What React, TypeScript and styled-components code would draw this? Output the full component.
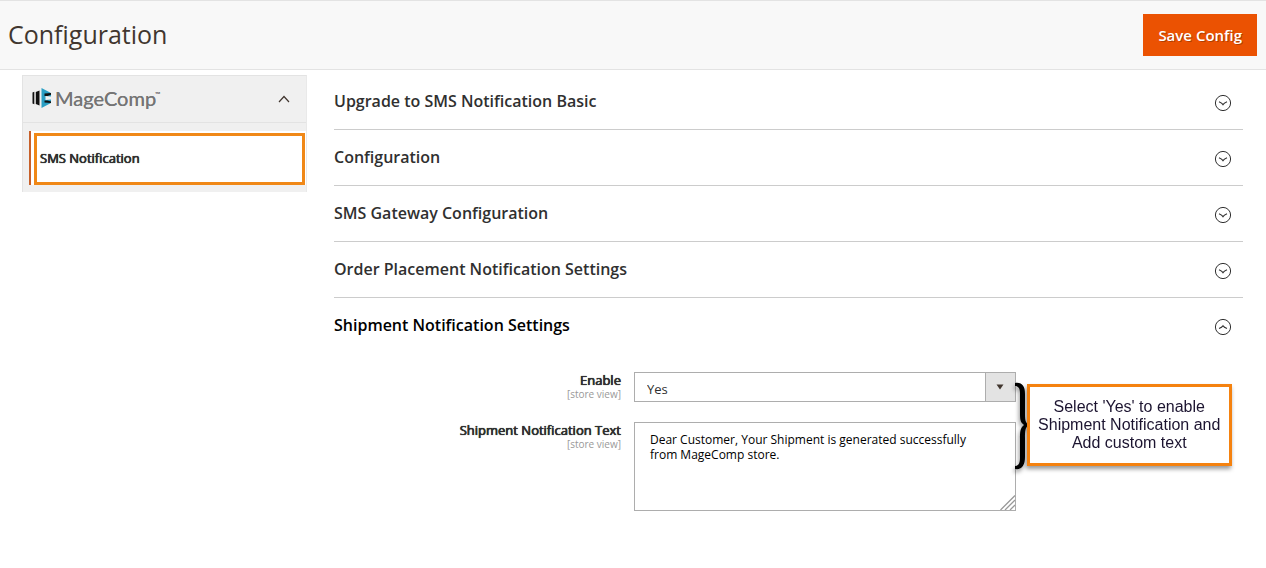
import React from "react";
import styled, { createGlobalStyle } from "styled-components";

const GlobalStyle = createGlobalStyle`
  *, *::before, *::after { box-sizing: border-box; }
  body {
    margin: 0;
    background: #fff;
    color: #303030;
    font-family: "Open Sans", "Noto Sans", sans-serif;
    font-size: 13px;
  }
  button, select, textarea { font: inherit; color: inherit; margin: 0; }
`;

const PageHeader = styled.header`
  display: flex;
  align-items: center;
  justify-content: space-between;
  min-height: 70px;
  padding: 0 9px 0 8px;
  background: #f8f8f8;
  border-top: 1px solid #e3e3e3;
  border-bottom: 1px solid #e3e3e3;
`;

const PageTitle = styled.h1`
  margin: 0;
  padding-bottom: 2px;
  font-size: 25px;
  line-height: 34px;
  font-weight: 400;
  color: #41362f;
`;

const SaveButton = styled.button`
  height: 42px;
  padding: 0 15px;
  border: 0;
  background: #eb5202;
  color: #fff;
  font-size: 15px;
  font-weight: 600;
  text-shadow: 1px 1px 0 rgba(0, 0, 0, 0.25);
`;

const Columns = styled.div`
  display: flex;
  align-items: flex-start;
  gap: 27px;
  padding: 4px 23px 0 22px;
`;

const Sidebar = styled.nav`
  flex: 0 0 285px;
  margin-top: 1px;
  padding-bottom: 7px;
  background: #f0f0f0;
  border: 1px solid #e3e3e3;
  border-bottom: 0;
  border-right-color: #e9e9e9;
`;

const SidebarToggle = styled.button`
  display: flex;
  align-items: center;
  justify-content: space-between;
  width: 100%;
  height: 47px;
  padding: 0 16px 0 9px;
  border: 0;
  border-bottom: 1px solid #e3e3e3;
  background: transparent;
`;

const Brand = styled.span`
  display: flex;
  align-items: center;
  gap: 3px;
  padding-bottom: 2px;
  color: #757575;
  font-family: Lato, sans-serif;
  font-size: 20px;
  line-height: 24px;
  text-shadow: 0 0 0 currentColor;
`;

const Trademark = styled.sup`
  align-self: flex-start;
  margin-left: -4px;
  font-size: 7px;
  line-height: 16px;
`;

const SidebarItem = styled.a`
  display: block;
  margin: 8px 0 0 6px;
  padding: 2px 1px 0 3px;
  border-left: 2px solid #c8602a;
  background: #fff;
  color: #303030;
  font-size: 13px;
  font-weight: 500;
  text-decoration: none;
  text-shadow: 0 0 0 currentColor, 0 0 0 currentColor, 0 0 1px currentColor;
`;

const Highlight = styled.span`
  display: flex;
  align-items: center;
  height: 52px;
  padding: 0 3px 2px;
  border: 3px solid #f08817;
`;

const Main = styled.main`
  flex: 1;
  min-width: 0;
`;

const SectionToggle = styled.button<{ $open?: boolean }>`
  display: flex;
  align-items: center;
  justify-content: space-between;
  width: 100%;
  height: 56px;
  padding: 0 11px 2px 0;
  border: 0;
  border-bottom: 1px solid ${(p) => (p.$open ? "transparent" : "#cccccc")};
  background: transparent;
  color: ${(p) => (p.$open ? "#000" : "#303030")};
  font-size: 16px;
  font-weight: 600;
  text-align: left;

  svg { margin-top: 4px; }
`;

const Fields = styled.div`
  position: relative;
  display: flex;
  flex-direction: column;
  gap: 20px;
  padding: 18px 0 56px;
`;

const Field = styled.div`
  display: grid;
  grid-template-columns: 33% 42%;
  align-items: start;
`;

const FieldLabel = styled.label`
  padding-right: 13px;
  font-size: 13px;
  font-weight: 500;
  line-height: 17px;
  text-align: right;
  text-shadow: 0 0 0 currentColor, 0 0 0 currentColor, 0 0 1px currentColor;
`;

const Scope = styled.small`
  display: block;
  color: #999;
  font-size: 10px;
  font-weight: 400;
  line-height: 11px;
  text-shadow: none;
`;

const Control = styled.div`
  position: relative;
  display: flex;
`;

const Select = styled.select`
  width: 100%;
  height: 30px;
  padding: 4px 40px 0 12px;
  border: 1px solid #adadad;
  border-radius: 0;
  background: #fff;
  appearance: none;
`;

const SelectArrow = styled.span`
  position: absolute;
  top: 0;
  right: 0;
  display: flex;
  align-items: center;
  justify-content: center;
  width: 31px;
  height: 30px;
  border: 1px solid #adadad;
  background: #e3e3e3;
  pointer-events: none;
`;

const TextArea = styled.textarea`
  width: 100%;
  height: 89px;
  padding: 9px 40px 10px 15px;
  border: 1px solid #adadad;
  border-radius: 0;
  color: #000;
  font-size: 12px;
  line-height: 15px;
  resize: none;
`;

const Grip = styled.svg`
  position: absolute;
  right: 1px;
  bottom: 1px;
  pointer-events: none;
`;

const Annotation = styled.aside`
  position: absolute;
  top: 28px;
  left: 75%;
  display: flex;
  align-items: flex-start;
  margin-left: -1px;
  filter: drop-shadow(-1px 3px 2px rgba(0, 0, 0, 0.4));
`;

const AnnotationBox = styled.p`
  width: 205px;
  height: 82px;
  margin: 2px 0 0 -2px;
  padding: 11px 0 0;
  border: 3px solid #f5820f;
  background: #fff;
  color: #1c1430;
  font-family: "Liberation Sans", Arial, sans-serif;
  font-size: 16px;
  line-height: 18px;
  text-align: center;
`;

function BrandMark() {
  return (
    <svg width="20" height="22" viewBox="0 0 20 22" aria-hidden="true">
      <path d="M0.500 5.500l1.800-0.700v12.400l-1.800-0.700zM3.800 5l3.700-1.500v15L3.800 17z" fill="#111" />
      <path d="M9.500 1L19 6v3.500l-5.500-0.500v4l5.500-0.500V16L9.500 21z" fill="#2b9fc4" />
      <path d="M12.500 6.500L19 6v1.800l-3.500 1.200h-3zM12.500 13.500h3L19 14.500V16l-6.500-0.500z" fill="#111" />
    </svg>
  );
}

function CircleChevron({ up }: { up?: boolean }) {
  return (
    <svg width="18" height="18" viewBox="0 0 18 18" fill="none" stroke="#303030" aria-hidden="true">
      <circle cx="9" cy="9" r="7.600" strokeWidth="1" />
      <path d={up ? "M5 10.500Q8 9.300 9 7.700Q10 9.300 13 10.500" : "M5 7.800Q8 9 9 10.600Q10 9 13 7.800"} strokeWidth="1.100" />
    </svg>
  );
}

const closedSections = [
  "Upgrade to SMS Notification Basic",
  "Configuration",
  "SMS Gateway Configuration",
  "Order Placement Notification Settings",
];

export default function App() {
  return (
    <>
      <GlobalStyle />
      <PageHeader>
        <PageTitle>Configuration</PageTitle>
        <SaveButton type="button">Save Config</SaveButton>
      </PageHeader>
      <Columns>
        <Sidebar>
          <SidebarToggle type="button" aria-expanded="true">
            <Brand>
              <BrandMark />
              MageComp
              <Trademark>™</Trademark>
            </Brand>
            <svg width="12" height="8" viewBox="0 0 12 8" fill="none" stroke="#41362f" strokeWidth="1.200" aria-hidden="true">
              <path d="M1 7l5-5.500L11 7" />
            </svg>
          </SidebarToggle>
          <SidebarItem href="#sms-notification">
            <Highlight>SMS Notification</Highlight>
          </SidebarItem>
        </Sidebar>
        <Main>
          {closedSections.map((title) => (
            <SectionToggle key={title} type="button" aria-expanded="false">
              {title}
              <CircleChevron />
            </SectionToggle>
          ))}
          <SectionToggle $open type="button" aria-expanded="true">
            Shipment Notification Settings
            <CircleChevron up />
          </SectionToggle>
          <Fields>
            <Field>
              <FieldLabel htmlFor="enable">
                Enable
                <Scope>[store view]</Scope>
              </FieldLabel>
              <Control>
                <Select id="enable" defaultValue="Yes">
                  <option>Yes</option>
                  <option>No</option>
                </Select>
                <SelectArrow>
                  <svg width="8" height="6" viewBox="0 0 8 6" aria-hidden="true">
                    <path d="M0.500 0.500h7L4 5.500z" fill="#41362f" />
                  </svg>
                </SelectArrow>
              </Control>
            </Field>
            <Field>
              <FieldLabel htmlFor="shipment-text">
                Shipment Notification Text
                <Scope>[store view]</Scope>
              </FieldLabel>
              <Control>
                <TextArea
                  id="shipment-text"
                  defaultValue={"Dear Customer, Your Shipment is generated successfully\nfrom MageComp store."}
                />
                <Grip width="15" height="15" viewBox="0 0 15 15" fill="none" stroke="#999" aria-hidden="true">
                  <path d="M0.500 15L15 0.500M5 15L15 5M10 15l5-5" strokeWidth="1.300" />
                </Grip>
              </Control>
            </Field>
            <Annotation>
              <svg width="14" height="88" viewBox="0 0 14 88" aria-hidden="true">
                <path
                  d="M0 1C7 0 10 4 10 12V30C10 37 10 41 14 43C10 45 10 49 10 56V75C10 83 7 88 0 87V84C3 84 5 82 5 76V57C5 50 5 46 9 43C5 40 5 37 5 30V11C5 6 3 4 0 4Z"
                  fill="#000"
                />
              </svg>
              <AnnotationBox>
                Select 'Yes' to enable
                <br />
                Shipment Notification and
                <br />
                Add custom text
              </AnnotationBox>
            </Annotation>
          </Fields>
        </Main>
      </Columns>
    </>
  );
}
